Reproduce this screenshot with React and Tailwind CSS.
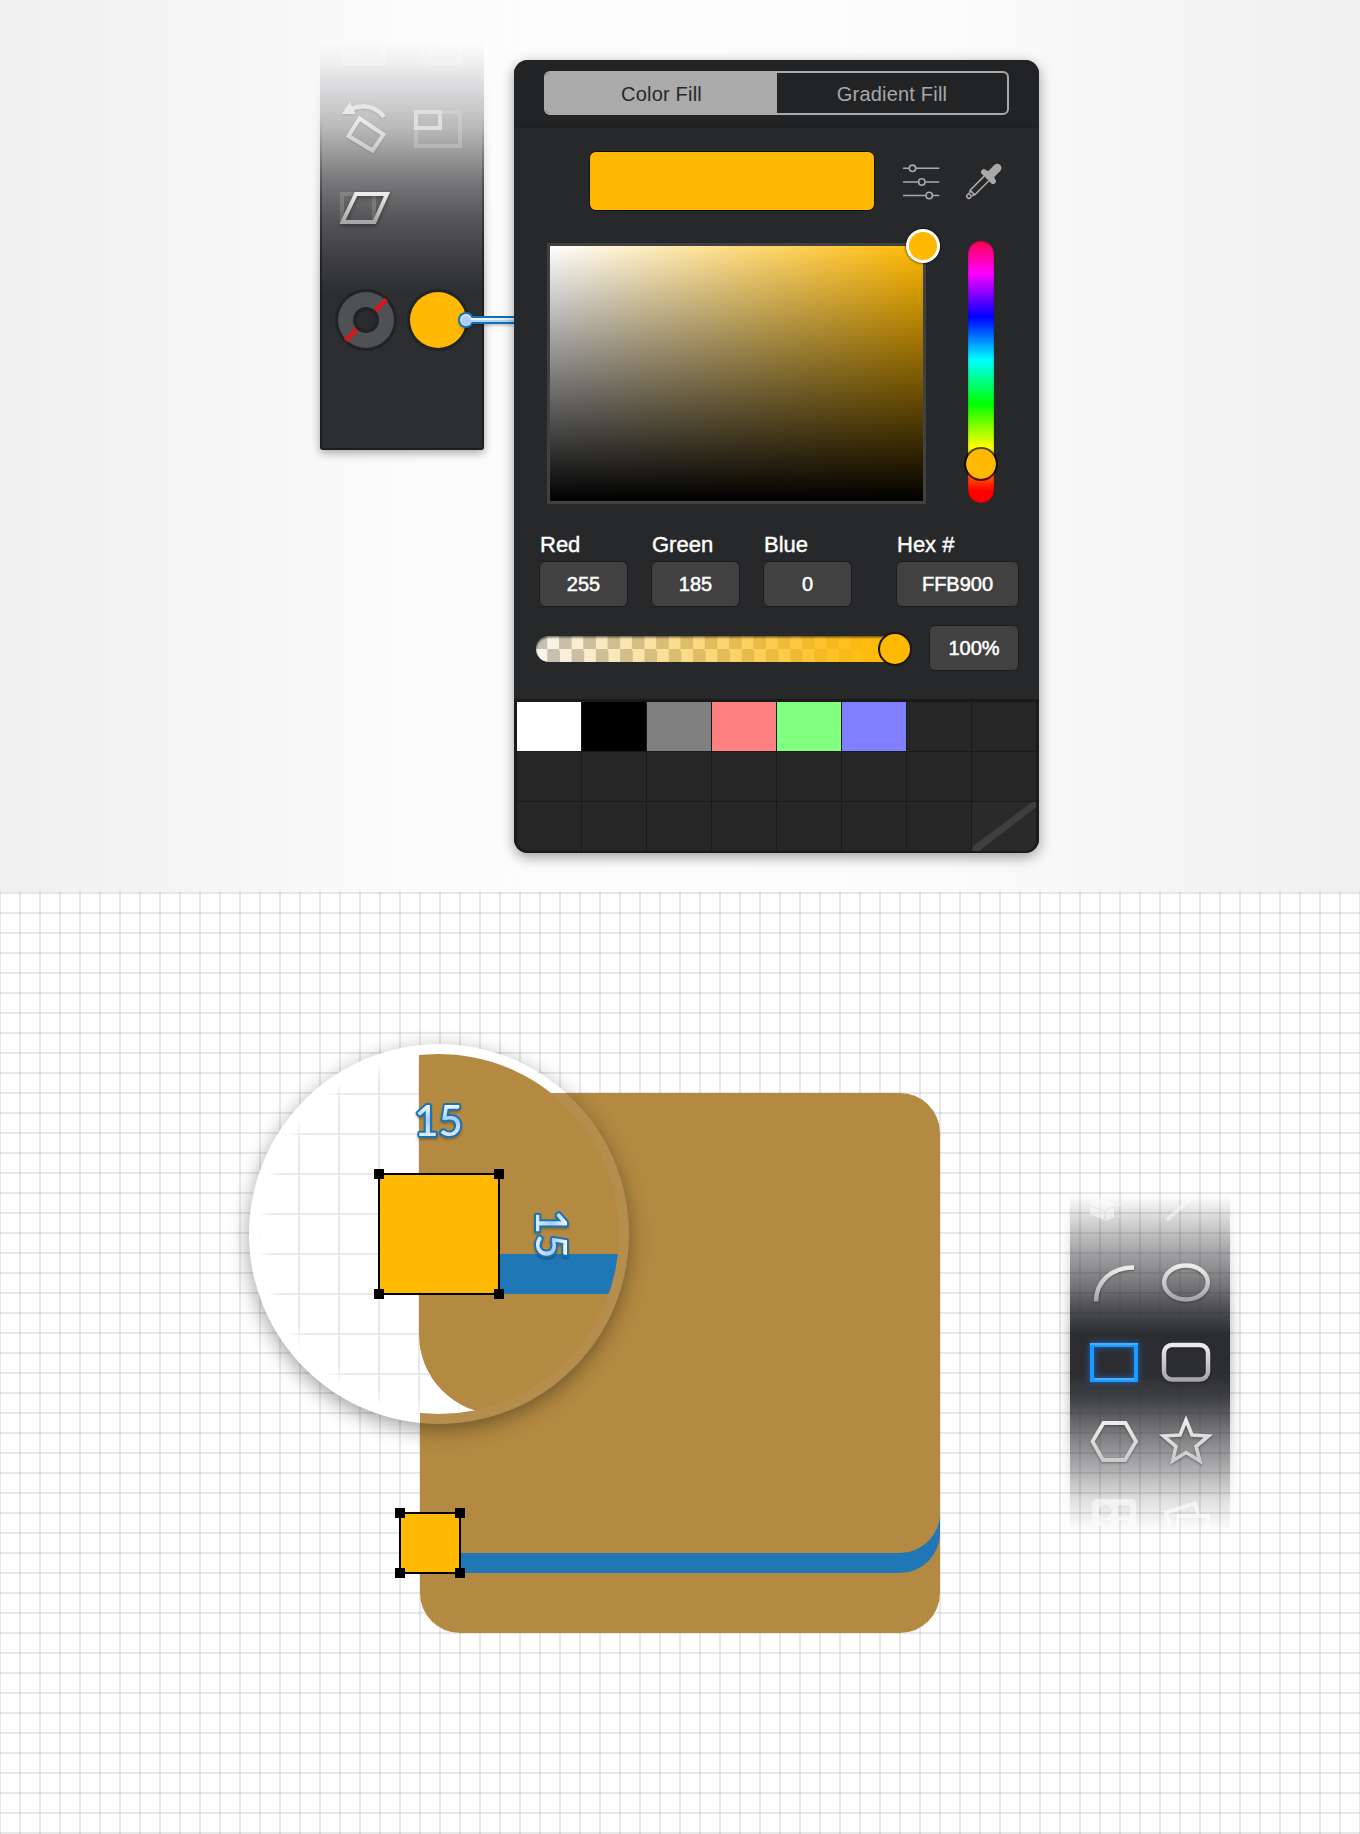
import React from "react";

const SANS = "font-['Liberation_Sans',Arial,sans-serif]";

function IconGradients() {
  return (
    <svg className="absolute h-0 w-0" aria-hidden="true">
      <defs>
        <linearGradient id="metal" x1="0" y1="0" x2="0" y2="1">
          <stop offset="0" stopColor="#ececec" />
          <stop offset="1" stopColor="#a6a6a8" />
        </linearGradient>
        <linearGradient id="pale" x1="0" y1="0" x2="0" y2="1">
          <stop offset="0" stopColor="#ececec" />
          <stop offset="1" stopColor="#cbcbcd" />
        </linearGradient>
        <linearGradient id="ice" x1="0" y1="0" x2="0" y2="1">
          <stop offset="0.15" stopColor="#ffffff" />
          <stop offset="0.5" stopColor="#a5cdfa" />
          <stop offset="0.9" stopColor="#e8f3ff" />
        </linearGradient>
      </defs>
    </svg>
  );
}

function FillToolbar() {
  return (
    <div className="relative mt-[38px] h-[412px] w-[164px] shrink-0">
      <div className="absolute -inset-x-[24px] bottom-[-24px] top-0 [mask-image:linear-gradient(to_bottom,transparent_30px,black_240px)]">
        <div className="mx-[24px] h-[412px] rounded-[3px] shadow-[0_3px_10px_rgba(0,0,0,0.35)]" />
      </div>
      <div className="absolute inset-0 rounded-b-[3px] bg-[linear-gradient(to_bottom,rgba(250,250,250,0)_4px,#f1f1f2_22px,#d8d8da_52px,#b9b9ba_90px,#9c9c9d_114px,#777779_144px,#58585b_178px,#3f3f42_220px,#2d2e31_256px,#2d2e31_100%)]" />
      <div className="absolute inset-0 rounded-b-[3px] border-x-2 border-b-2 border-[#1d1e20] [mask-image:linear-gradient(to_bottom,transparent_80px,black_260px)]" />
      <svg className="relative block" width="164" height="412" viewBox="320 38 164 412" fill="none">
        <g opacity="0.35" stroke="#fff" strokeWidth="4">
          <path d="M343 46V60a4 4 0 0 0 4 4H380a4 4 0 0 0 4-4V46" strokeOpacity="0.8" />
          <path d="M343 58H384" strokeOpacity="0.7" strokeWidth="6" />
          <path d="M430 46V63H459V46M422 50l4 12" strokeOpacity="0.8" />
        </g>
        <g className="drop-shadow-[0_1px_1px_rgba(0,0,0,0.12)]">
          <path d="M351 109.500C362 103.500 376 106 384 117" stroke="#e6e6e7" strokeWidth="4.5" />
          <path d="M341.500 114L350 102L355.500 114Z" fill="#eaeaeb" />
          <path d="M359.500 118.500L383.500 134.500L372.500 150.500L348.500 136Z" stroke="url(#pale)" strokeWidth="4" />
        </g>
        <rect x="416" y="112" width="44" height="34" stroke="#ddd" strokeOpacity="0.35" strokeWidth="4" />
        <rect x="416" y="112" width="24" height="16" stroke="#dfdfe0" strokeWidth="4" />
        <rect x="342" y="194" width="32" height="28" stroke="#ddd" strokeOpacity="0.2" strokeWidth="4" />
        <path
          d="M356 194H387L374.500 222H342.500Z"
          stroke="url(#metal)"
          strokeWidth="4"
          className="drop-shadow-[0_2px_2px_rgba(0,0,0,0.4)]"
        />
        <circle cx="366" cy="320" r="31" fill="#222325" />
        <circle cx="366" cy="320" r="28" fill="#505153" />
        <path d="M386.500 299.500L345.500 340.500" stroke="#dc1417" strokeWidth="4.500" />
        <circle cx="366" cy="320" r="13" fill="#222325" />
        <circle cx="366" cy="320" r="9.500" fill="#2a2b2d" />
        <circle cx="438" cy="320" r="31" fill="#222325" />
        <circle cx="438" cy="320" r="28" fill="#ffb902" />
      </svg>
      <svg
        className="absolute left-[138px] top-[272px] drop-shadow-[0_2px_1px_rgba(0,0,0,0.2)]"
        width="56"
        height="20"
        viewBox="458 310 56 20"
        fill="none"
      >
        <rect x="468" y="316" width="46" height="8" fill="#1470b4" />
        <circle cx="466" cy="320" r="8" fill="#1470b4" />
        <circle cx="466" cy="320" r="6" fill="#e2efff" />
        <rect x="470" y="318" width="44" height="4" fill="#aed4fa" />
        <rect x="470" y="318" width="44" height="2" fill="#e8f3ff" />
        <circle cx="466" cy="320.500" r="5" fill="#abcdf8" />
      </svg>
    </div>
  );
}

function SlidersIcon() {
  return (
    <svg width="38" height="38" viewBox="0 0 38 38" fill="none" stroke="#a9a9aa" strokeWidth="1.6">
      <path d="M1 5.300H6.700M13.700 5.300H37.300M1 19H16.300M23.300 19H37.300M1 32.500H23.700M30.700 32.500H37.300" />
      <circle cx="10.500" cy="5.300" r="3.200" />
      <circle cx="19.800" cy="19" r="3.200" />
      <circle cx="27.200" cy="32.500" r="3.200" />
    </svg>
  );
}

function DropperIcon() {
  return (
    <svg width="38" height="38" viewBox="0 0 38 38" fill="none">
      <g transform="translate(19 19) rotate(45)">
        <path d="M-3.300 -5V14.500L-1.800 17.500M3.300 -5V14.500L1.800 17.500M-3.500 15H3.500" stroke="#a9a9aa" strokeWidth="1.600" />
        <circle cx="0" cy="20" r="2.100" stroke="#a9a9aa" strokeWidth="1.500" />
        <path
          d="M-4 -11.500V-20a4.200 4.200 0 0 1 8.400 0V-11.500L6.500 -10.500a2.800 2.800 0 0 1 0 5.600H-6.500a2.800 2.800 0 0 1 0 -5.600Z"
          fill="#a9a9aa"
        />
      </g>
    </svg>
  );
}

function Field({ label, value, width }) {
  return (
    <div className={width}>
      {label && <div className="h-[32px] whitespace-pre pl-[1px] text-[22px] leading-[31px] text-white [-webkit-text-stroke:0.4px_white]">{label}</div>}
      <div className="flex h-[46px] items-center justify-center rounded-[6px] border-[1.5px] border-[#1c1d1e] bg-[#414141] text-[20px] text-white [-webkit-text-stroke:0.5px_white]">
        {value}
      </div>
    </div>
  );
}

const SWATCHES = [
  "bg-white",
  "bg-black",
  "bg-[#808080]",
  "bg-[#ff8080]",
  "bg-[#80ff80]",
  "bg-[#8080ff]",
];

function SwatchGrid() {
  return (
    <div className="mt-auto grid h-[154px] grid-cols-[repeat(8,64px)] grid-rows-[repeat(3,48.5px)] gap-x-px gap-y-[1.5px] bg-[#1a1a1a] pl-[3px] pt-[3px]">
      {Array.from({ length: 24 }, (_, i) => (
        <div
          key={i}
          className={`${SWATCHES[i] || (i === 23 ? "bg-[#2a2a2a]" : "bg-[#262626]")} ${i === 16 ? "rounded-bl-[11px]" : ""} ${i === 23 ? "rounded-br-[11px] overflow-hidden" : ""}`}
        >
          {i === 23 && (
            <svg className="block" width="64" height="49" viewBox="0 0 64 49">
              <path d="M0 45V49H7L64 5V0H60Z" fill="#3f3f3f" />
            </svg>
          )}
        </div>
      ))}
    </div>
  );
}

function ColorPanel() {
  return (
    <div className={`${SANS} z-10 ml-[30px] mt-[60px] flex h-[793px] w-[525px] shrink-0 flex-col overflow-hidden rounded-[14px] bg-[#27282a] shadow-[0_4px_14px_rgba(0,0,0,0.38)]`}>
      <div className="flex h-[68px] justify-center border-b border-[#1e1f21] bg-[#222325] pt-[11px]">
        <div className="flex h-[44px] w-[465px] overflow-hidden rounded-[6px] border-2 border-[#aaaaaa] text-[20px] leading-[42px] tracking-[0.2px]">
          <div className="w-[231px] bg-[#aaaaaa] text-center text-[#27282a]">Color Fill</div>
          <div className="flex-1 text-center text-[#a8a8a8]">Gradient Fill</div>
        </div>
      </div>
      <div className="mt-[23px] flex h-[60px] items-center pl-[75px]">
        <div className="h-[60px] w-[286px] rounded-[7px] border-[1.5px] border-[#101010] bg-[#ffb902]" />
        <div className="ml-[27px] pt-[2px]">
          <SlidersIcon />
        </div>
        <div className="ml-[24px] pt-[2px]">
          <DropperIcon />
        </div>
      </div>
      <div className="mt-[30px] flex pl-[33px]">
        <div className="relative mt-[2px] h-[261px] w-[379px] border-[3px] border-[#404143]">
          <div className="h-full w-full bg-[linear-gradient(to_bottom,transparent,black),linear-gradient(to_right,white,#ffb902)]" />
          <div className="absolute -right-[17px] -top-[17px] h-[34px] w-[34px] rounded-full border-[3px] border-white bg-[#ffb902] shadow-[0_0_2px_1px_rgba(0,0,0,0.45)]" />
        </div>
        <div className="relative ml-[42px] h-[262px] w-[26px] rounded-full bg-[linear-gradient(to_bottom,#ff0050_0px,#ff00ff_32px,#0000ff_76px,#00ffff_119px,#00ff00_163px,#ffff00_206px,#ff0000_250px)] shadow-[inset_0_0_2px_rgba(0,0,0,0.45)]">
          <div className="absolute -left-[4px] top-[206px] h-[34px] w-[34px] rounded-full border-2 border-black/70 bg-[#ffb902] bg-clip-padding" />
        </div>
      </div>
      <div className="mt-[25px] flex gap-[23px] pl-[25px]">
        <Field label="Red" value="255" width="w-[89px]" />
        <Field label="Green" value="185" width="w-[89px]" />
        <Field label="Blue" value="0" width="w-[89px]" />
        <div className="ml-[21px]">
          <Field label="Hex #" value="FFB900" width="w-[123px]" />
        </div>
      </div>
      <div className="mt-[18px] flex items-center pl-[22px]">
        <div className="relative top-[1px] h-[26px] w-[372px] rounded-full bg-[linear-gradient(to_right,rgba(255,185,2,0),#ffb902_95%),repeating-conic-gradient(#c4c0b8_0_25%,#f8f5ee_0_50%)] bg-[length:100%_100%,24.3px_26px] bg-[position:0_0,-13px_0] shadow-[inset_0_1.5px_2px_rgba(0,0,0,0.55)]">
          <div className="absolute -top-[4px] left-[342px] h-[34px] w-[34px] rounded-full border-2 border-[#1c1606] bg-[#ffb902]" />
        </div>
        <div className="ml-[21px]">
          <Field value="100%" width="w-[90px]" />
        </div>
      </div>
      <SwatchGrid />
    </div>
  );
}

function Handles({ x, y, size }) {
  return (
    <g>
      <rect x={x} y={y} width={size} height={size} fill="#ffb902" stroke="#000" strokeWidth="2" />
      {[[0, 0], [1, 0], [0, 1], [1, 1]].map(([a, b]) => (
        <rect key={`${a}${b}`} x={x + a * size - 5} y={y + b * size - 5} width="10" height="10" fill="#000" />
      ))}
    </g>
  );
}

function Artwork() {
  return (
    <svg className="absolute left-0 top-0" width="1000" height="942" viewBox="0 892 1000 942">
      <defs>
        <clipPath id="lens">
          <circle cx="439" cy="1234" r="180" />
        </clipPath>
        <clipPath id="besideCard">
          <path d="M200 1000H700V1093H420V1500H200Z" />
        </clipPath>
        <clipPath id="card">
          <rect x="420" y="1093" width="520" height="540" rx="40" />
        </clipPath>
        <radialGradient id="gridFade" gradientUnits="userSpaceOnUse" cx="439" cy="1234" r="180">
          <stop offset="0.92" stopColor="#fff" />
          <stop offset="1" stopColor="#333" />
        </radialGradient>
        <mask id="gridMask" maskUnits="userSpaceOnUse" x="249" y="1044" width="380" height="380">
          <circle cx="439" cy="1234" r="180" fill="url(#gridFade)" />
        </mask>
        <filter id="lensShadow" x="-20%" y="-20%" width="140%" height="140%">
          <feGaussianBlur stdDeviation="11" />
        </filter>
      </defs>
      <rect x="420" y="1093" width="520" height="540" rx="40" fill="#b48a42" />
      <path d="M450 1553H900A40 40 0 0 0 940 1513V1533A40 40 0 0 1 900 1573H450Z" fill="#1f77b5" />
      <circle cx="439" cy="1240" r="189" fill="#000" opacity="0.4" filter="url(#lensShadow)" />
      <circle cx="439" cy="1234" r="190" fill="#fff" clipPath="url(#besideCard)" />
      <circle cx="439" cy="1234" r="190" fill="#b58d4d" clipPath="url(#card)" />
      <g clipPath="url(#lens)">
        <rect x="249" y="1044" width="170" height="380" fill="#fff" />
        <path d="M419 1330V1424H520V1414H499A80 80 0 0 1 419 1334Z" fill="#fff" />
        <g mask="url(#gridMask)" stroke="#e8e8e8" strokeWidth="2">
          {[259, 299, 339, 379, 419, 459].map((x) => (
            <path key={x} d={`M${x} 1044V1424`} />
          ))}
          {[1054, 1094, 1134, 1174, 1214, 1254, 1294, 1334, 1374, 1414].map((y) => (
            <path key={y} d={`M249 ${y}H460`} />
          ))}
        </g>
        <rect x="419" y="900" width="600" height="514" rx="80" fill="#b48a42" />
        <rect x="480" y="1254" width="200" height="40" fill="#1f77b5" />
      </g>
      <Handles x={379} y={1174} size={120} />
      <Handles x={400} y={1513} size={60} />
      <g
        className="font-['Lato','Open_Sans',sans-serif] text-[42px] font-medium drop-shadow-[0_2px_1px_rgba(0,0,0,0.25)]"
        strokeLinejoin="round"
        textAnchor="middle"
        fill="url(#ice)"
        stroke="#1a72b4"
        strokeWidth="4"
        paintOrder="stroke"
      >
        <text x="438.5" y="1136">15</text>
        <text transform="translate(536 1234) rotate(90)">15</text>
      </g>
    </svg>
  );
}

function ShapeToolbar() {
  return (
    <div className="absolute left-[1070px] top-[303px] h-[340px] w-[160px]">
      <div className="absolute -inset-x-[24px] inset-y-0 [mask-image:linear-gradient(to_bottom,transparent_0px,rgba(0,0,0,0.2)_25px,rgba(0,0,0,0.42)_55px,rgba(0,0,0,0.65)_90px,rgba(0,0,0,0.85)_115px,black_140px,black_180px,rgba(0,0,0,0.9)_204px,rgba(0,0,0,0.62)_240px,rgba(0,0,0,0.38)_275px,rgba(0,0,0,0.15)_305px,transparent_338px)]">
        <div className="mx-[24px] h-full bg-[#2c2d31] shadow-[0_0_12px_rgba(0,0,0,0.35)]" />
      </div>
      <svg className="relative block" width="160" height="340" viewBox="1070 1195 160 340" fill="none">
        <g opacity="0.5">
          <path d="M1090 1202L1101 1198L1114 1204V1217L1106 1221L1090 1214Z" fill="#fff" />
          <path d="M1090 1206L1105 1211L1114 1206M1105 1211V1221" stroke="#ddd" />
          <path d="M1118 1205L1134 1197" stroke="#fff" strokeOpacity="0.4" strokeWidth="3" />
          <path d="M1167 1220L1192 1197" stroke="#fff" strokeWidth="3.500" />
        </g>
        <g className="drop-shadow-[0_1px_1px_rgba(0,0,0,0.35)]" strokeWidth="4.500">
          <path d="M1096 1301.500C1096 1282 1111 1267.500 1134 1267.500" stroke="url(#metal)" />
          <ellipse cx="1186" cy="1282.500" rx="21.800" ry="17" stroke="url(#metal)" />
          <rect x="1164" y="1345" width="44" height="34.500" rx="8" stroke="url(#metal)" />
          <path d="M1092.500 1441.500L1103.500 1423H1125.500L1136 1441.500L1125 1460H1103Z" stroke="url(#pale)" strokeWidth="3.800" />
          <path
            d="M1186 1420L1192 1435L1208.500 1436L1196 1446.500L1200 1461L1186 1452.500L1172.500 1461L1176 1446.500L1163.500 1436L1180 1435Z"
            stroke="url(#pale)"
            strokeWidth="3.600"
          />
        </g>
        <g className="drop-shadow-[0_0_3px_rgba(20,120,255,0.7)]">
          <rect x="1092" y="1345" width="44" height="35" stroke="#1b9aff" strokeWidth="4.2" />
          <path d="M1090 1344H1138M1094 1379H1134" stroke="#5cb6ff" strokeWidth="1.500" />
        </g>
        <g opacity="0.65">
          <path
            fillRule="evenodd"
            d="M1092 1526V1504a5 5 0 0 1 5-5h34a5 5 0 0 1 5 5V1526h-8v-6h-9v6h-8v-6h-9v6Z M1105 1505a6.500 6.500 0 1 0 .01 0Z M1118 1505.500h12v11h-12Z"
            fill="#fff"
            fillOpacity="0.85"
          />
          <path d="M1170 1526L1166 1512.500L1195 1503.500L1198 1514M1178 1530V1516H1208V1530" stroke="#fff" strokeWidth="3.500" />
        </g>
      </svg>
    </div>
  );
}

export default function App() {
  return (
    <main className="flex h-[1834px] w-[1360px] flex-col overflow-hidden bg-white">
      <IconGradients />
      <section className="flex h-[892px] shrink-0 items-start bg-[linear-gradient(to_right,#f0f0f0,#f6f6f6_18%,#fcfcfc_32%,#fdfdfd_50%,#fcfcfc_68%,#f6f6f6_82%,#f0f0f0)] pl-[320px]">
        <FillToolbar />
        <ColorPanel />
      </section>
      <section className="relative h-[942px] shrink-0 bg-white bg-[linear-gradient(to_right,rgba(0,0,0,0.09)_2px,transparent_2px),linear-gradient(to_bottom,rgba(0,0,0,0.09)_2px,transparent_2px)] bg-[length:20px_20px] bg-[position:-1px_0]">
        <Artwork />
        <ShapeToolbar />
      </section>
    </main>
  );
}
